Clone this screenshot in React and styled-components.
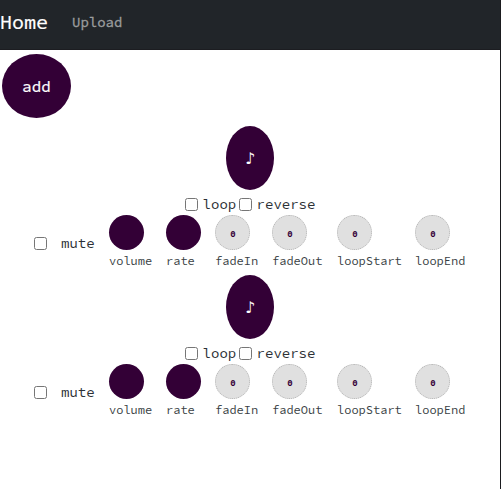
import React from "react";
import styled, { createGlobalStyle } from "styled-components";

const GlobalStyle = createGlobalStyle`
  *, *::before, *::after { box-sizing: border-box; }
  body {
    margin: 0;
    overflow: hidden;
    background: #fff;
    color: #2c3035;
    font-family: "Source Code Pro", "Noto Sans Mono CJK SC", "DejaVu Sans Mono", monospace;
    font-size: 14px;
  }
`;

const Page = styled.div`
  height: 489px;
  width: 501px;
  border-right: 1px solid #1b1c1f;
`;

const Navbar = styled.nav`
  display: flex;
  align-items: center;
  gap: 24px;
  height: 50px;
  padding-bottom: 5px;
  background: #212529;
  border-bottom: 1px solid #1c1d21;
`;

const Brand = styled.a`
  font-size: 20px;
  line-height: 30px;
  color: #fff;
  -webkit-text-stroke: 0.2px #fff;
`;

const NavLink = styled.a`
  font-size: 14px;
  line-height: 21px;
  color: #9b9d9e;
  -webkit-text-stroke: 0.3px #9b9d9e;
`;

const RoundButton = styled.button`
  display: flex;
  align-items: center;
  justify-content: center;
  width: ${(p) => p.$width}px;
  height: 64px;
  padding: 0;
  border: 0;
  border-radius: 50%;
  background: #330036;
  color: #fff;
  font-family: inherit;
  font-size: 16px;
  line-height: 24px;
  -webkit-text-stroke: 0.2px #fff;
`;

const Note = styled.span`
  padding-top: 2px;
  font-family: "DejaVu Sans", sans-serif;
  font-size: 16px;
  -webkit-text-stroke: 0;
`;

const Toolbar = styled.div`
  padding: 4px 2px 8px;
`;

const Track = styled.section`
  display: flex;
  flex-direction: column;
  align-items: center;
  height: 149px;
`;

const Options = styled.div`
  display: flex;
  align-items: center;
  height: 25px;
  padding-top: 3px;
  gap: 2.4px;
`;

const CheckLabel = styled.label`
  display: flex;
  align-items: center;
  gap: ${(p) => p.$gap}px;
  line-height: 21px;
`;

const Checkbox = styled.input.attrs({ type: "checkbox" })`
  width: 13px;
  height: 13px;
  margin: 0;
`;

const Controls = styled.div`
  display: grid;
  grid-template-columns: 75px 57px 49px 57px 65px 78px 52px;
  width: 432px;
  align-items: center;
`;

const Control = styled.div`
  display: flex;
  flex-direction: column;
`;

const Knob = styled.div`
  display: flex;
  align-items: center;
  justify-content: center;
  width: 35px;
  height: 35px;
  padding: 3px 0 0 1px;
  border-radius: 50%;
  border: ${(p) => (p.$filled ? "0" : "1px dotted #b4b4b4")};
  background: ${(p) => (p.$filled ? "#330036" : "#e0e0e0")};
  color: #330036;
  font-size: 9px;
  font-weight: 700;
  line-height: 12px;
`;

const KnobLabel = styled.span`
  height: 21px;
  color: #3a3f45;
  font-size: 12px;
  line-height: 21px;
`;

const knobs = [
  { name: "volume", filled: true },
  { name: "rate", filled: true },
  { name: "fadeIn" },
  { name: "fadeOut" },
  { name: "loopStart" },
  { name: "loopEnd" },
];

function SoundTrack() {
  return (
    <Track>
      <RoundButton $width={48}><Note>♪</Note></RoundButton>
      <Options>
        <CheckLabel $gap={5}><Checkbox />loop</CheckLabel>
        <CheckLabel $gap={5}><Checkbox />reverse</CheckLabel>
      </Options>
      <Controls>
        <CheckLabel $gap={14}><Checkbox />mute</CheckLabel>
        {knobs.map(({ name, filled }) => (
          <Control key={name}>
            <Knob $filled={filled}>{filled ? "" : "0"}</Knob>
            <KnobLabel>{name}</KnobLabel>
          </Control>
        ))}
      </Controls>
    </Track>
  );
}

export default function App() {
  return (
    <>
      <GlobalStyle />
      <Page>
        <Navbar>
          <Brand>Home</Brand>
          <NavLink>Upload</NavLink>
        </Navbar>
        <Toolbar>
          <RoundButton $width={69}>add</RoundButton>
        </Toolbar>
        <SoundTrack />
        <SoundTrack />
      </Page>
    </>
  );
}
